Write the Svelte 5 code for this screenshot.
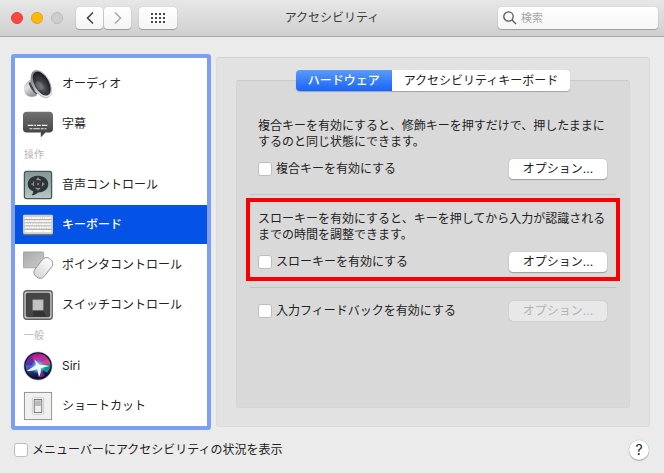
<script>
  let selected = $state('keyboard');
  let tab = $state('hardware');
  let query = $state('');
  let showInMenuBar = $state(false);

  const groups = [
    {
      title: '',
      items: [
        { id: 'audio', label: 'オーディオ' },
        { id: 'captions', label: '字幕' }
      ]
    },
    {
      title: '操作',
      items: [
        { id: 'voice', label: '音声コントロール' },
        { id: 'keyboard', label: 'キーボード' },
        { id: 'pointer', label: 'ポインタコントロール' },
        { id: 'switch', label: 'スイッチコントロール' }
      ]
    },
    {
      title: '一般',
      items: [
        { id: 'siri', label: 'Siri' },
        { id: 'shortcut', label: 'ショートカット' }
      ]
    }
  ];

  const tabs = [
    { id: 'hardware', label: 'ハードウェア' },
    { id: 'a11y-keyboard', label: 'アクセシビリティキーボード' }
  ];

  let settings = $state([
    {
      id: 'sticky',
      text: '複合キーを有効にすると、修飾キーを押すだけで、押したままにするのと同じ状態にできます。',
      label: '複合キーを有効にする',
      on: false
    },
    {
      id: 'slow',
      text: 'スローキーを有効にすると、キーを押してから入力が認識されるまでの時間を調整できます。',
      label: 'スローキーを有効にする',
      on: false,
      highlight: true
    },
    {
      id: 'feedback',
      label: '入力フィードバックを有効にする',
      on: false,
      disabled: true
    }
  ]);
</script>

{#snippet icon(id)}
  <svg class="icon" viewBox="0 0 32 32" aria-hidden="true">
    {#if id === 'audio'}
      <defs>
        <linearGradient id="base" x1="0" y1="0" x2="0.400" y2="1">
          <stop offset="0" stop-color="#a9a9ad" />
          <stop offset="0.500" stop-color="#e4e4e7" />
          <stop offset="1" stop-color="#96969b" />
        </linearGradient>
        <linearGradient id="rim" x1="0" y1="0" x2="0.600" y2="1">
          <stop offset="0" stop-color="#55565a" />
          <stop offset="0.500" stop-color="#d0d0d4" />
          <stop offset="1" stop-color="#f4f4f6" />
        </linearGradient>
        <radialGradient id="cone" cx="0.4" cy="0.6" r="0.6">
          <stop offset="0" stop-color="#77787c" />
          <stop offset="0.4" stop-color="#424347" />
          <stop offset="1" stop-color="#1d1e21" />
        </radialGradient>
      </defs>
      <path d="M8 11C4 14 1 17 1 21c0 4 2 7 5 8 3 1 6 1 9-1z" fill="url(#base)" />
      <path d="M6 15c1 4 4 9 8 12l2-1-7-13z" fill="#46474b" />
      <path d="M8 14L10 3l17 28c-6-1-12-4-14-7z" fill="url(#rim)" />
      <ellipse cx="19.500" cy="16" rx="9" ry="16" transform="rotate(-29 19.500 16)" fill="url(#rim)" stroke="#8d8d92" stroke-width="0.500" />
      <ellipse cx="20" cy="15.500" rx="7.800" ry="14" transform="rotate(-29 20 15.500)" fill="url(#cone)" />
      <ellipse cx="17" cy="18" rx="3" ry="5" transform="rotate(-29 17 18)" fill="#85868b" opacity="0.5" />
    {:else if id === 'captions'}
      <defs>
        <linearGradient id="bubble" x1="0" y1="0" x2="0" y2="1">
          <stop offset="0" stop-color="#727272" />
          <stop offset="1" stop-color="#3b3b3b" />
        </linearGradient>
      </defs>
      <path d="M4 3h24a4 4 0 0 1 4 4v14a4 4 0 0 1-4 4h-4l-5 5v-5H4a4 4 0 0 1-4-4V7a4 4 0 0 1 4-4z" fill="url(#bubble)" />
      <path d="M5 17.500h22" stroke="#eee" stroke-width="1.200" stroke-dasharray="6 1 2 1 4 1" />
      <path d="M7 21h18" stroke="#eee" stroke-width="1.200" stroke-dasharray="3 1 7 1" />
    {:else if id === 'voice'}
      <defs>
        <linearGradient id="tile" x1="0" y1="0" x2="0" y2="1">
          <stop offset="0" stop-color="#829598" />
          <stop offset="1" stop-color="#b8c8c7" />
        </linearGradient>
      </defs>
      <rect x="1.500" y="1.500" width="29" height="29" rx="2" fill="url(#tile)" stroke="#46585b" stroke-width="1.400" />
      <path d="M16 6c7 0 11 4 11 9s-4 9-11 9c-2 2-4 3-7 3 1-1 2-3 2-4-4-2-6-4-6-8 0-5 4-9 11-9z" fill="#303436" />
      <circle cx="16" cy="15" r="5" fill="none" stroke="#8f999b" stroke-width="1.200" stroke-dasharray="5 2.850" stroke-dashoffset="2.500" />
      <circle cx="16" cy="15" r="1.400" fill="#6c7678" />
      <path d="M16 7.500l1.500 2h-3zM16 22.500l1.500-2h-3zM8.500 15l2-1.500v3zM23.500 15l-2-1.500v3z" fill="#7d888a" />
    {:else if id === 'keyboard'}
      <rect x="0" y="6" width="32" height="21" rx="1.500" fill="#77746c" />
      <rect x="0" y="5" width="32" height="20.500" rx="1.500" fill="#d3d0c9" />
      <path d="M2 8.500h28" stroke="#fff" stroke-width="2" stroke-dasharray="1.800 0.600" />
      <path d="M2 12h28M2 18.500h28" stroke="#fff" stroke-width="2.400" stroke-dasharray="2 0.600" />
      <path d="M2 15.250h28" stroke="#fff" stroke-width="2.400" stroke-dasharray="3 0.600 2 0.600 2 0.600" />
      <path d="M2 22.500h7.500M10 22.500h11M21.700 22.500h8.300" stroke="#fff" stroke-width="2.600" />
      <path d="M1.500 10.200h29M1.500 13.600h29M1.500 16.900h29M1.500 20.500h29" stroke="#99968f" stroke-width="0.600" />
    {:else if id === 'pointer'}
      <defs>
        <linearGradient id="pad" x1="0" y1="0" x2="1" y2="1">
          <stop offset="0" stop-color="#aaa" />
          <stop offset="1" stop-color="#cacaca" />
        </linearGradient>
        <linearGradient id="mouse" x1="0" y1="0" x2="0" y2="1">
          <stop offset="0" stop-color="#fff" />
          <stop offset="1" stop-color="#d6d6d6" />
        </linearGradient>
      </defs>
      <rect x="0" y="2" width="22" height="17" rx="1" fill="url(#pad)" stroke="#999" stroke-width="0.800" />
      <rect x="15.500" y="7" width="12.500" height="24" rx="5.500" transform="rotate(38 21.500 19)" fill="url(#mouse)" stroke="#8f8f8f" stroke-width="0.900" />
    {:else if id === 'switch'}
      <rect x="0.800" y="0.800" width="30.400" height="30.400" rx="3" fill="#c9c9c9" stroke="#606060" stroke-width="1.400" />
      <rect x="3.500" y="3.500" width="25" height="25" rx="1.500" fill="#464646" stroke="#333" />
      <path d="M11 21h10l4 7H11z" fill="#333" />
      <rect x="10.500" y="10.500" width="11" height="11" fill="#c3c3c3" stroke="#999" stroke-width="0.600" />
    {:else if id === 'siri'}
      <defs>
        <linearGradient id="orb" x1="0" y1="0" x2="0.200" y2="1">
          <stop offset="0" stop-color="#8e1763" />
          <stop offset="0.300" stop-color="#c928a0" />
          <stop offset="0.550" stop-color="#3a63d0" />
          <stop offset="0.800" stop-color="#1b2a6b" />
          <stop offset="1" stop-color="#0d0e26" />
        </linearGradient>
        <radialGradient id="glow">
          <stop offset="0" stop-color="#fff" />
          <stop offset="0.400" stop-color="#bdf4ff" stop-opacity="0.700" />
          <stop offset="1" stop-color="#58b9ff" stop-opacity="0" />
        </radialGradient>
      </defs>
      <circle cx="16" cy="16" r="15.500" fill="#c8c8d2" />
      <circle cx="16" cy="16" r="14" fill="url(#orb)" stroke="#15152c" stroke-width="1.500" />
      <path d="M3 15c0-4 3-8 7-10 0 5 2 8 5 11z" fill="#4a2ba8" opacity="0.800" />
      <path d="M17 15c4-2 9-3 12-1 0 3-1 6-3 9-4-1-7-4-9-8z" fill="#15938c" />
      <path d="M18 14c3-3 6-5 9-5 1 2 2 4 2 5-4 0-7 0-11 0z" fill="#e33d7c" />
      <path d="M17 18c3 2 5 5 6 8-2 2-4 2-5 2z" fill="#7a1f8f" />
      <circle cx="16" cy="17" r="8" fill="url(#glow)" />
      <path d="M4 21c4-2 7-4 10-6 0-2-1-4-2-6 3 2 4 4 5 6 3 0 7 0 11 1-4 1-7 2-9 2 0 4 0 6-2 10-1-4-1-7-2-9-4 2-7 3-11 2z" fill="#e8fcff" />
    {:else if id === 'shortcut'}
      <rect x="1.500" y="1.500" width="29" height="29" fill="#f0f0f0" stroke="#8f8f8f" />
      <rect x="10" y="7" width="12" height="18" rx="1" fill="#fafafa" stroke="#ccc" />
      <rect x="12" y="9" width="8" height="14" fill="#eee" stroke="#707070" />
      <rect x="13" y="10" width="6" height="6" fill="#b9b9b9" />
    {/if}
  </svg>
{/snippet}

<div class="window">
  <header class="titlebar">
    <div class="controls">
      <div class="lights">
        <button class="light close" aria-label="閉じる"></button>
        <button class="light minimize" aria-label="しまう"></button>
        <button class="light zoom" aria-label="拡大" disabled></button>
      </div>
      <div class="nav">
        <button class="tool" aria-label="戻る">
          <svg width="8" height="14" viewBox="0 0 8 14"><path d="M7 1.500L1.500 7 7 12.500" /></svg>
        </button>
        <button class="tool" aria-label="進む" disabled>
          <svg width="8" height="14" viewBox="0 0 8 14"><path d="M1 1.500L6.500 7 1 12.500" /></svg>
        </button>
      </div>
      <button class="tool all" aria-label="すべてを表示">
        <svg width="14" height="10" viewBox="0 0 14 10">
          {#each [0, 4, 8] as y}
            {#each [0, 4, 8, 12] as x}
              <rect {x} {y} width="2" height="2" />
            {/each}
          {/each}
        </svg>
      </button>
    </div>
    <h1>アクセシビリティ</h1>
    <label class="search">
      <svg width="14" height="14" viewBox="0 0 14 14" aria-hidden="true">
        <circle cx="5.500" cy="5.500" r="4.700" />
        <path d="M9 9l4 4" />
      </svg>
      <input type="search" placeholder="検索" aria-label="検索" bind:value={query} />
    </label>
  </header>

  <main>
    <nav class="sidebar">
      {#each groups as group}
        {#if group.title}
          <h2>{group.title}</h2>
        {/if}
        {#each group.items as item}
          <button class="item" class:selected={selected === item.id} onclick={() => (selected = item.id)}>
            {@render icon(item.id)}
            <span>{item.label}</span>
          </button>
        {/each}
      {/each}
    </nav>

    <section class="panel">
      <div class="box">
        <div class="tabs" role="tablist">
          {#each tabs as t}
            <button role="tab" aria-selected={tab === t.id} class:active={tab === t.id} onclick={() => (tab = t.id)}>
              {t.label}
            </button>
          {/each}
        </div>

        {#each settings as setting, i}
          {#if i > 0}
            <hr />
          {/if}
          <div class="setting" class:highlight={setting.highlight} class:compact={!setting.text}>
            {#if setting.text}
              <p>{setting.text}</p>
            {/if}
            <div class="row">
              <label class="check">
                <input type="checkbox" bind:checked={setting.on} />
                {setting.label}
              </label>
              <button class="option" disabled={setting.disabled}>オプション...</button>
            </div>
          </div>
        {/each}
      </div>
    </section>
  </main>

  <footer>
    <label class="check">
      <input type="checkbox" bind:checked={showInMenuBar} />
      メニューバーにアクセシビリティの状況を表示
    </label>
    <button class="help" aria-label="ヘルプ">?</button>
  </footer>
</div>

<style>
  :global(body) {
    background: #ebebeb;
  }

  .window {
    font-family: Inter, 'Noto Sans CJK JP', sans-serif;
    font-size: 12px;
    line-height: 16px;
    color: #222;
  }

  button,
  input {
    margin: 0;
    padding: 0;
    border: 0;
    font: inherit;
    color: inherit;
  }

  h1,
  h2,
  p {
    margin: 0;
    font-size: 12px;
    font-weight: 400;
  }

  .titlebar {
    display: grid;
    grid-template-columns: 1fr auto 1fr;
    align-items: center;
    box-sizing: border-box;
    height: 37px;
    padding: 0 6px;
    background: linear-gradient(#e7e7e7, #cfcfcf);
    border-bottom: 1px solid #a9a9a9;
  }

  .titlebar h1 {
    color: #3c3c3c;
  }

  .controls,
  .lights,
  .nav {
    display: flex;
    align-items: center;
  }

  .lights {
    gap: 8px;
    padding: 0 13px 0 5px;
  }

  .light {
    width: 12px;
    height: 12px;
    border-radius: 50%;
  }

  .close {
    background: #fc4640;
    border: 1px solid #e33e38;
  }

  .minimize {
    background: #fdb80a;
    border: 1px solid #e0a410;
  }

  .zoom {
    background: #cdcdcd;
    border: 1px solid #b9b9b9;
  }

  .nav {
    gap: 1px;
    margin-right: 8px;
  }

  .tool {
    display: flex;
    align-items: center;
    justify-content: center;
    width: 27px;
    height: 22px;
    background: linear-gradient(#fff, #f4f4f4);
    border-radius: 4px;
    box-shadow: 0 0 1px rgba(0, 0, 0, 0.25), 0 1px 1px rgba(0, 0, 0, 0.25);
  }

  .tool.all {
    width: 38px;
  }

  .tool path {
    fill: none;
    stroke: #444;
    stroke-width: 1.6;
  }

  .tool:disabled path {
    stroke: #aaa;
  }

  .tool rect {
    fill: #444;
  }

  .search {
    display: flex;
    align-items: center;
    justify-self: end;
    gap: 4px;
    box-sizing: border-box;
    width: 160px;
    height: 22px;
    padding: 0 5px;
    background: linear-gradient(#fff, #f5f5f5);
    border-radius: 4px;
    box-shadow: 0 0 1px rgba(0, 0, 0, 0.25), 0 1px 1px rgba(0, 0, 0, 0.25);
  }

  .search svg {
    flex: none;
    fill: none;
    stroke: #555;
    stroke-width: 1.3;
  }

  .search input {
    flex: 1;
    min-width: 0;
    font-size: 11px;
    background: none;
    outline: none;
    appearance: none;
  }

  .search input::placeholder {
    color: #a6a6a6;
  }

  main {
    display: grid;
    grid-template-columns: 200px 1fr;
    gap: 5px;
    padding: 17px 14px 0 11px;
  }

  .sidebar {
    display: flex;
    flex-direction: column;
    gap: 1px;
    padding: 6px 0 1px;
    background: #fff;
    border: 4px solid #7d9ff3;
    border-radius: 3px;
  }

  .sidebar h2 {
    padding-left: 9px;
    font-size: 10px;
    line-height: 20px;
    color: #b5b5b5;
  }

  .item {
    display: flex;
    align-items: center;
    gap: 9px;
    height: 39px;
    padding: 0 8px;
    text-align: left;
    background: none;
  }

  .item.selected {
    color: #fff;
    font-weight: 500;
    background: #0453e6;
  }

  .icon {
    flex: none;
    width: 30px;
    height: 30px;
  }

  .panel {
    display: flex;
    margin: 3px 0;
    padding: 22px 19px 18px;
    background: #e2e2e2;
    border: 1px solid #dcdcdc;
    border-top-color: #d3d3d3;
    border-radius: 3px;
  }

  .box {
    flex: 1;
    padding: 0 9px;
    background: #d9d9d9;
    border: 1px solid #d5d5d5;
    border-top-color: #cbcbcb;
    border-radius: 3px;
  }

  .tabs {
    display: flex;
    justify-content: center;
    margin: -11px 0 14px;
  }

  .tabs button {
    height: 21px;
    padding: 0 12px;
    background: #fff;
    box-shadow: 0 1px 1px rgba(0, 0, 0, 0.25);
  }

  .tabs button:first-child {
    border-radius: 4px 0 0 4px;
  }

  .tabs button:last-child {
    border-radius: 0 4px 4px 0;
  }

  .tabs .active {
    color: #fff;
    font-weight: 500;
    background: linear-gradient(#5a9bfa, #1a63f8);
  }

  .setting {
    padding: 9px 9px 5px 8px;
    border: 4px solid transparent;
  }

  .setting.compact {
    padding-top: 6px;
  }

  .setting.highlight {
    border-color: #fb0000;
  }

  .setting p {
    margin-bottom: 9px;
  }

  hr {
    height: 1px;
    margin: 6px 4px 3px;
    border: 0;
    background: #c3c3c3;
  }

  .row {
    display: flex;
    align-items: center;
    justify-content: space-between;
  }

  .check {
    display: flex;
    align-items: center;
    gap: 4px;
  }

  .check input {
    width: 14px;
    height: 14px;
    background: #fff;
    border: 1px solid #bdbdbd;
    border-radius: 3px;
    appearance: none;
  }

  .check input:checked {
    background: #1a63f8;
  }

  .option {
    width: 98px;
    height: 20px;
    background: #fff;
    border-radius: 4px;
    box-shadow: 0 0 1px rgba(0, 0, 0, 0.35), 0 1px 1px rgba(0, 0, 0, 0.25);
  }

  .option:disabled {
    color: #b3b3b3;
    background: #e8e8e8;
    box-shadow: 0 0 1px rgba(0, 0, 0, 0.35);
  }

  footer {
    display: flex;
    align-items: center;
    justify-content: space-between;
    padding: 10px 15px 13px 14px;
  }

  .help {
    width: 20px;
    height: 20px;
    font-size: 14px;
    background: #fff;
    border-radius: 50%;
    box-shadow: 0 0 1px rgba(0, 0, 0, 0.4), 0 1px 1px rgba(0, 0, 0, 0.25);
  }
</style>
